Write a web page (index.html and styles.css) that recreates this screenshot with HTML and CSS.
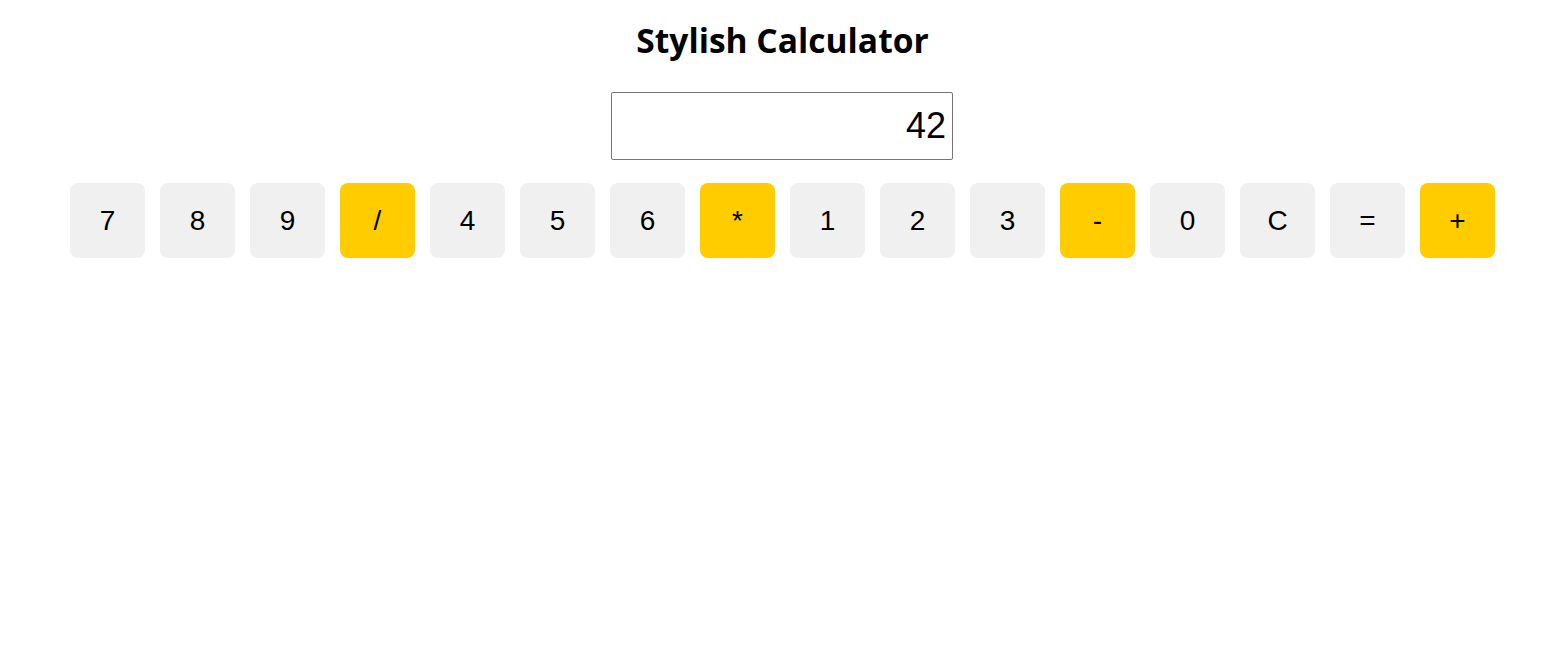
FILE: index.html
```html
<!DOCTYPE html>
<html lang="en">
<head>
<meta charset="utf-8">
<title>Stylish Calculator</title>
<link rel="stylesheet" href="styles.css">
</head>
<body>
<div class="calculator">
  <h1 class="title">Stylish Calculator</h1>
  <input class="display" type="text" value="42" readonly>
  <div class="keys">
    <button class="key">7</button>
    <button class="key">8</button>
    <button class="key">9</button>
    <button class="key op">/</button>
    <button class="key">4</button>
    <button class="key">5</button>
    <button class="key">6</button>
    <button class="key op">*</button>
    <button class="key">1</button>
    <button class="key">2</button>
    <button class="key">3</button>
    <button class="key op">-</button>
    <button class="key">0</button>
    <button class="key">C</button>
    <button class="key">=</button>
    <button class="key op">+</button>
  </div>
</div>
</body>
</html>
```
FILE: styles.css
```css
html, body {
  margin: 0;
  padding: 0;
  background: #ffffff;
}
body {
  padding: 0 2px 0 0;
}
.calculator {
  display: flex;
  flex-direction: column;
  align-items: center;
}
.title {
  margin: 20px 0 0;
  font-family: "Open Sans", sans-serif;
  font-weight: 700;
  font-size: 33.6px;
  line-height: 40px;
  color: #000;
}
.display {
  box-sizing: border-box;
  margin: 32px 1px 0 0;
  width: 342px;
  height: 68px;
  padding: 0 6px;
  border: 1px solid #767676;
  border-radius: 2px;
  font-family: "Liberation Sans", Arial, sans-serif;
  font-size: 36px;
  text-align: right;
  color: #000;
  background: #fff;
  outline: none;
}
.keys {
  display: flex;
  gap: 15px;
  margin-top: 23px;
}
.key {
  width: 75px;
  height: 75px;
  border: none;
  border-radius: 8px;
  background: #f0f0f0;
  font-family: "Liberation Sans", Arial, sans-serif;
  font-size: 28px;
  color: #000;
  padding: 0;
}
.key.op {
  background: #ffcc00;
}
```
